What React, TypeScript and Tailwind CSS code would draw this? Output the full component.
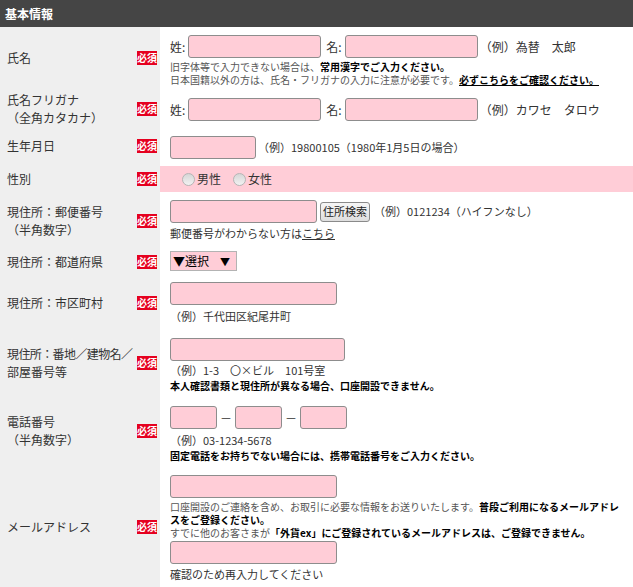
import * as React from "react";

const FONT = { fontFamily: '"Noto Sans CJK JP", "Noto Sans", sans-serif' };

function Badge() {
  return (
    <span className="flex h-[14px] w-[20px] shrink-0 items-center justify-center bg-[#e5001f] text-[10px] font-bold leading-none text-white">
      必須
    </span>
  );
}

function Field({ w, h = 23 }: { w: number; h?: number }) {
  return (
    <span
      className="block shrink-0 rounded-[3px] border border-[#8d8d8d] bg-[#ffcdd7]"
      style={{ width: w, height: h }}
    />
  );
}

function Row({
  label,
  children,
  rightClass = "",
}: {
  label: React.ReactNode;
  children: React.ReactNode;
  rightClass?: string;
}) {
  return (
    <div className="flex">
      <div className="flex w-[160px] shrink-0 items-center justify-between bg-[#efefef] pl-[7px] pr-[3px]">
        <div className="whitespace-nowrap text-[12px] leading-[18px] text-[#333]">{label}</div>
        <Badge />
      </div>
      <div className={"min-w-0 flex-1 bg-white pl-[10px] " + rightClass}>{children}</div>
    </div>
  );
}

function Radio({ label }: { label: string }) {
  return (
    <span className="flex items-center gap-[2px]">
      <span className="block h-[13px] w-[13px] rounded-full border border-[#b5b5b5] bg-gradient-to-b from-[#d6d6d6] to-[#f2f2f2]" />
      <span>{label}</span>
    </span>
  );
}

export default function App() {
  return (
    <div className="w-[633px] bg-white text-[#333]" style={FONT}>
      <div className="flex h-[27px] items-center bg-[#454545] pl-[5px] text-[12px] font-bold text-white">
        基本情報
      </div>

      <Row label="氏名" rightClass="pt-[8px] pb-[3px]">
        <div className="flex items-center text-[12px]">
          <span className="mr-[3px]">姓:</span>
          <Field w={133} />
          <span className="ml-[5px] mr-[3px]">名:</span>
          <Field w={133} />
          <span className="ml-[2px]">（例）為替　太郎</span>
        </div>
        <div className="mt-[2px] text-[10px] leading-[13px] text-[#555]">
          <div>
            旧字体等で入力できない場合は、<b className="text-black">常用漢字でご入力ください。</b>
          </div>
          <div>
            日本国籍以外の方は、氏名・フリガナの入力に注意が必要です。
            <b className="text-black underline">必ずこちらをご確認ください。</b>
          </div>
        </div>
      </Row>

      <Row
        label={
          <>
            氏名フリガナ
            <br />
            （全角カタカナ）
          </>
        }
        rightClass="pt-[9px] pb-[8px]"
      >
        <div className="flex items-center text-[12px]">
          <span className="mr-[3px]">姓:</span>
          <Field w={133} />
          <span className="ml-[5px] mr-[3px]">名:</span>
          <Field w={133} />
          <span className="ml-[2px]">（例）カワセ　タロウ</span>
        </div>
      </Row>

      <Row label="生年月日" rightClass="pt-[7px] pb-[4px]">
        <div className="flex items-center text-[11px]">
          <Field w={86} />
          <span className="ml-[2px]">（例）19800105（1980年1月5日の場合）</span>
        </div>
      </Row>

      <div className="flex">
        <div className="flex w-[160px] shrink-0 items-center justify-between bg-[#efefef] pl-[7px] pr-[3px]">
          <div className="text-[12px] leading-[18px] text-[#333]">性別</div>
          <Badge />
        </div>
        <div className="flex-1 bg-white py-[3px]">
          <div className="flex h-[26px] items-center gap-[12px] bg-[#ffcdd7] pl-[22px] text-[12px]">
            <Radio label="男性" />
            <Radio label="女性" />
          </div>
        </div>
      </div>

      <Row
        label={
          <>
            現住所：郵便番号
            <br />
            （半角数字）
          </>
        }
        rightClass="pt-[5px] pb-[7px]"
      >
        <div className="flex items-center text-[11px]">
          <Field w={147} />
          <span className="ml-[3px] flex h-[20px] items-center rounded-[3px] border border-[#8a8a8a] bg-gradient-to-b from-[#f6f6f6] to-[#dedede] px-[2px] text-[11px] text-[#222]">
            住所検索
          </span>
          <span className="ml-[4px]">（例）0121234（ハイフンなし）</span>
        </div>
        <div className="mt-[3px] text-[11px] leading-[14px]">
          郵便番号がわからない方は<span className="underline">こちら</span>
        </div>
      </Row>

      <Row label="現住所：都道府県" rightClass="pt-[4px] pb-[5px]">
        <div className="flex h-[20px] w-[67px] items-center justify-between border border-[#b3b3b3] bg-[#ffcdd7] pl-[2px] pr-[6px] text-[12px] text-black">
          <span>▼選択</span>
          <span className="text-[10px]">▼</span>
        </div>
      </Row>

      <Row label="現住所：市区町村" rightClass="pt-[6px] pb-[7px]">
        <Field w={167} />
        <div className="mt-[4px] text-[11px] leading-[14px]">（例）千代田区紀尾井町</div>
      </Row>

      <Row
        label={
          <>
            <span className="tracking-[-0.6px]">現住所：番地／建物名／</span>
            <br />
            部屋番号等
          </>
        }
        rightClass="pt-[8px] pb-[2px]"
      >
        <Field w={175} />
        <div className="mt-[2px] text-[11px] leading-[14px]">（例）1-3　〇×ビル　101号室</div>
        <div className="mt-[2px] text-[10px] font-bold leading-[14px] text-black">
          本人確認書類と現住所が異なる場合、口座開設できません。
        </div>
      </Row>

      <Row
        label={
          <>
            電話番号
            <br />
            （半角数字）
          </>
        }
        rightClass="pt-[11px] pb-[4px]"
      >
        <div className="flex items-center text-[12px]">
          <Field w={47} />
          <span className="w-[18px] text-center">－</span>
          <Field w={47} />
          <span className="w-[18px] text-center">－</span>
          <Field w={47} />
        </div>
        <div className="mt-[4px] text-[11px] leading-[14px]">（例）03-1234-5678</div>
        <div className="mt-[2px] text-[10px] font-bold leading-[14px] text-black">
          固定電話をお持ちでない場合には、携帯電話番号をご入力ください。
        </div>
      </Row>

      <Row label="メールアドレス" rightClass="pt-[8px] pb-[6px]">
        <Field w={167} />
        <div className="mt-[2px] pr-[8px] text-[10px] leading-[13px] text-[#555]">
          <div>
            口座開設のご連絡を含め、お取引に必要な情報をお送りいたします。
            <b className="text-black">普段ご利用になるメールアドレスをご登録ください。</b>
          </div>
          <div>
            すでに他のお客さまが
            <b className="text-black">「外貨ex」にご登録されているメールアドレスは、ご登録できません。</b>
          </div>
        </div>
        <div className="mt-[2px]">
          <Field w={167} />
        </div>
        <div className="mt-[3px] text-[11px] leading-[14px]">確認のため再入力してください</div>
      </Row>
    </div>
  );
}
